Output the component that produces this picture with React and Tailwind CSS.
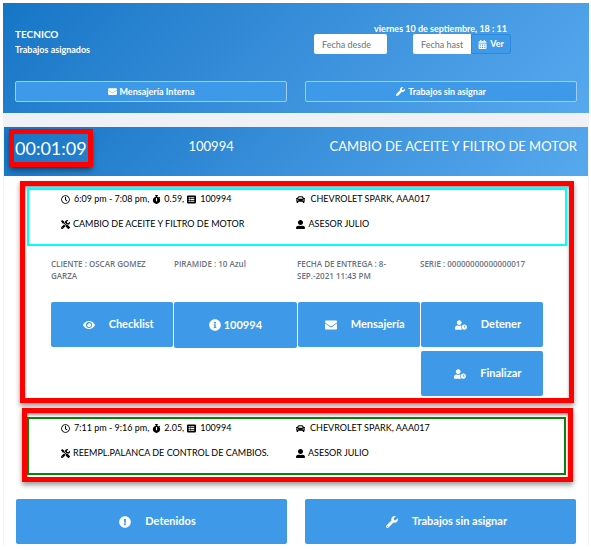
import React, { useState } from "react";
import {
  FaCalendarAlt,
  FaCar,
  FaEnvelope,
  FaExclamationCircle,
  FaEye,
  FaInfoCircle,
  FaListAlt,
  FaRegClock,
  FaStopwatch,
  FaTools,
  FaUserAlt,
  FaUserClock,
  FaWrench,
} from "react-icons/fa";

const jobs = [
  {
    id: 1,
    schedule: "6:09 pm - 7:08 pm,",
    hours: "0.59,",
    order: "100994",
    vehicle: "CHEVROLET SPARK, AAA017",
    task: "CAMBIO DE ACEITE Y FILTRO DE MOTOR",
    advisor: "ASESOR JULIO",
  },
  {
    id: 2,
    schedule: "7:11 pm - 9:16 pm,",
    hours: "2.05,",
    order: "100994",
    vehicle: "CHEVROLET SPARK, AAA017",
    task: "REEMPL.PALANCA DE CONTROL DE CAMBIOS.",
    advisor: "ASESOR JULIO",
  },
];

const details = [
  "CLIENTE : OSCAR GOMEZ GARZA",
  "PIRAMIDE : 10 Azul",
  "FECHA DE ENTREGA : 8-SEP.-2021 11:43 PM",
  "SERIE : 00000000000000017",
];

export default function App() {
  const [from, setFrom] = useState("");
  const [to, setTo] = useState("");

  return (
    <div className="min-h-screen bg-white pt-[3px] pr-[2px] pl-[3px] font-['Lato','Open_Sans',sans-serif] text-black">
      <div className="bg-[#f0f1f6]">
        {/* Header */}
        <header className="bg-linear-135 from-[#1476c6] to-[#57a9ee] px-3 pt-5 pb-[11px] text-white">
          <div className="grid grid-cols-2 gap-4">
            <div className="pt-[3px]">
              <h1 className="text-[10px] leading-4 font-bold">TECNICO</h1>
              <p className="text-[9px] leading-4 font-bold">Trabajos asignados</p>
            </div>
            <div>
              <p className="text-center text-[9px] leading-[11px] font-bold">
                viernes 10 de septiembre, 18 : 11
              </p>
              <form className="flex pl-[10px]" onSubmit={(e) => e.preventDefault()}>
                <input
                  type="text"
                  aria-label="Fecha desde"
                  placeholder="Fecha desde"
                  value={from}
                  onChange={(e) => setFrom(e.target.value)}
                  className="mr-[26px] h-5 w-[73px] rounded-xs bg-white px-2 text-[9px] text-gray-700 placeholder:text-gray-500"
                />
                <input
                  type="text"
                  aria-label="Fecha hasta"
                  placeholder="Fecha hasta"
                  value={to}
                  onChange={(e) => setTo(e.target.value)}
                  className="h-5 w-[58px] rounded-l-xs bg-white px-2 text-[9px] text-gray-700 placeholder:text-gray-500"
                />
                <button className="flex h-5 w-10 items-center justify-center gap-[3px] rounded-r-xs border border-[#2b8ade] bg-[#3e9ae8] text-[9px] font-bold">
                  <FaCalendarAlt /> Ver
                </button>
              </form>
            </div>
          </div>
          <div className="mt-[23px] grid grid-cols-2 gap-[18px]">
            <HeaderButton icon={<FaEnvelope />} label="Mensajería Interna" />
            <HeaderButton icon={<FaWrench />} label="Trabajos sin asignar" />
          </div>
        </header>

        {/* Current job */}
        <section className="mt-[14px] border-x border-gray-100 bg-white pb-[2px]">
          <div className="flex h-[49px] items-start justify-between bg-linear-135 from-[#1476c6] to-[#57a9ee] pt-[2px] pr-[11px] pl-[5px] text-white">
            <span className="flex h-[38px] items-center border-5 border-[#ff0000] px-px text-lg shadow-md shadow-black/40">
              00:01:09
            </span>
            <span className="text-[13px] leading-[34px]">100994</span>
            <span className="text-[13px] leading-[34px]">CAMBIO DE ACEITE Y FILTRO DE MOTOR</span>
          </div>

          <Highlight className="mr-[14px] ml-4 px-[2px] pt-[2px] pb-[2px]">
            <JobCard job={jobs[0]} className="border-[#00ffff]" />
            <div className="px-6">
              <div className="mt-3 grid grid-cols-4 font-['Open_Sans',sans-serif] text-[8px] leading-3 font-semibold text-gray-500">
                {details.map((d) => (
                  <p key={d} className="pr-3">{d}</p>
                ))}
              </div>
              <div className="mt-5 grid grid-cols-4 gap-x-px gap-y-[3px]">
                <ActionButton icon={<FaEye />} label="Checklist" />
                <ActionButton icon={<FaInfoCircle />} label="100994" compact />
                <ActionButton icon={<FaEnvelope />} label="Mensajería" />
                <ActionButton icon={<FaUserClock />} label="Detener" />
                <div className="col-start-4 grid">
                  <ActionButton icon={<FaUserClock />} label="Finalizar" />
                </div>
              </div>
            </div>
          </Highlight>

          <Highlight className="mr-[15px] ml-[18px] pt-1 pr-[2px] pb-[2px]">
            <JobCard job={jobs[1]} className="border-[#0b800b]" />
          </Highlight>

          <div className="mt-[17px] grid grid-cols-2 gap-[18px] px-3">
            <ActionButton icon={<FaExclamationCircle />} label="Detenidos" />
            <ActionButton icon={<FaWrench />} label="Trabajos sin asignar" />
          </div>
        </section>
      </div>
    </div>
  );
}

function Highlight({ className, children }) {
  return (
    <div
      className={`mt-[5px] border-5 border-[#ff0000] shadow-[0_3px_5px_rgba(0,0,0,0.4),inset_0_2px_3px_rgba(0,0,0,0.4)] ${className}`}
    >
      {children}
    </div>
  );
}

function HeaderButton({ icon, label }) {
  return (
    <button className="flex h-[21px] items-center justify-center gap-[3px] rounded-xs border border-[#9fcdf5] bg-[#3e9ae8] text-[9px] font-bold">
      {icon} {label}
    </button>
  );
}

function ActionButton({ icon, label, compact }) {
  return (
    <button
      className={`flex items-center justify-center rounded-xs bg-[#3e9ae8] text-[11px] font-bold text-white ${
        compact ? "h-[46px] gap-[3px]" : "h-[45px] gap-[14px] pl-3"
      }`}
    >
      <span className="text-xs">{icon}</span> {label}
    </button>
  );
}

function JobCard({ job, className }) {
  return (
    <div className={`grid h-[58px] grid-cols-[235fr_268fr] content-start gap-y-[9px] border-2 pt-px pl-8 text-[9px] leading-4 ${className}`}>
      <p className="flex items-center gap-[3px]">
        <FaRegClock className="mr-px" /> {job.schedule} <FaStopwatch /> {job.hours}
        <FaListAlt className="mr-px" /> {job.order}
      </p>
      <p className="flex items-center gap-[5px]">
        <FaCar /> {job.vehicle}
      </p>
      <p className="flex items-center gap-[3px]">
        <FaTools /> {job.task}
      </p>
      <p className="flex items-center gap-[3px]">
        <FaUserAlt /> {job.advisor}
      </p>
    </div>
  );
}
